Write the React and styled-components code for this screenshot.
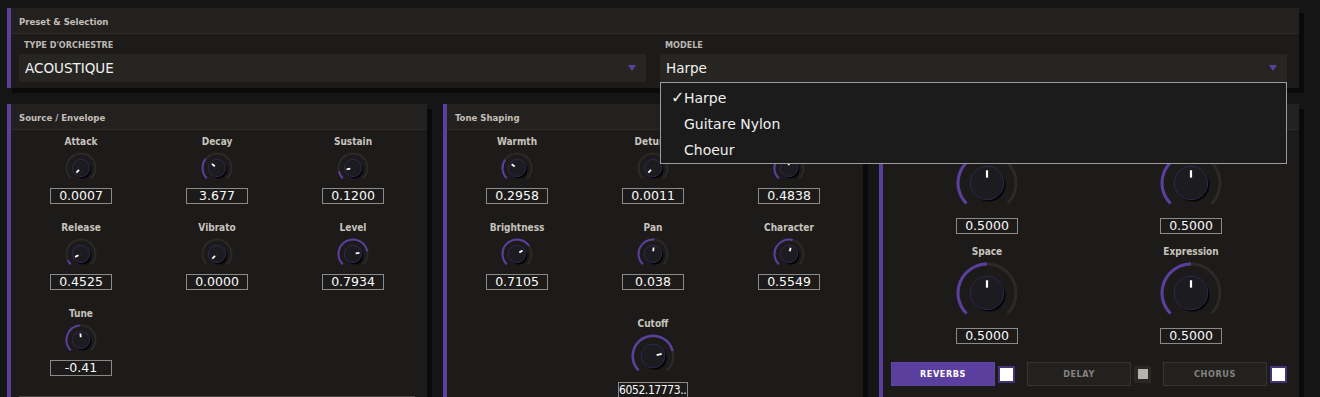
import React from 'react';
import styled, { createGlobalStyle } from 'styled-components';

const GlobalStyle = createGlobalStyle`
  html, body {
    margin: 0;
    padding: 0;
    background: #151515;
  }
  body {
    font-family: "DejaVu Sans Condensed", "DejaVu Sans", sans-serif;
    color: #ddd;
  }
`;

const Page = styled.div`
  width: 1320px;
  height: 397px;
  overflow: hidden;
  box-sizing: border-box;
  padding: 8px 0 0 7px;
  display: flex;
  flex-direction: column;
  gap: 16px;
`;

const Panel = styled.section`
  width: ${p => p.$w}px;
  height: ${p => (p.$h ? p.$h + 'px' : 'auto')};
  box-sizing: border-box;
  background: #1c1b1a;
  border-left: 4px solid #5a3f9e;
  box-shadow: 5px 5px 0 #0a0a0a;
  flex-shrink: 0;
`;

const PanelHeader = styled.header`
  height: 26px;
  box-sizing: border-box;
  display: flex;
  align-items: center;
  padding: 2px 0 0 8px;
  background: #222120;
  border-bottom: 1px solid #2c2b2a;
  font-size: 9.5px;
  font-weight: bold;
  color: #c3bfb8;
`;

const PanelBody = styled.div`
  padding: ${p => p.$pad || '6px 12px 0 8px'};
`;

const Row = styled.div`
  display: flex;
  gap: 16px;
`;

/* preset selectors */

const SelectGrid = styled.div`
  display: grid;
  grid-template-columns: 1fr 1fr;
  column-gap: 14px;
`;

const Field = styled.div`
  display: flex;
  flex-direction: column;
`;

const FieldLabel = styled.div`
  font-size: 9px;
  font-weight: bold;
  line-height: 12px;
  color: #bdb9b2;
  padding-left: 5px;
  margin-bottom: 3px;
`;

const SelectWrap = styled.div`
  position: relative;
`;

const SelectBox = styled.div`
  height: 28px;
  box-sizing: border-box;
  display: flex;
  align-items: center;
  justify-content: space-between;
  padding: 0 10px 0 6px;
  background: #262522;
  font-family: "DejaVu Sans", sans-serif;
  font-size: 13.5px;
  color: #f2f2f2;
`;

const Arrow = styled.span`
  width: 0;
  height: 0;
  border-left: 4px solid transparent;
  border-right: 4px solid transparent;
  border-top: 6px solid #5a3f9e;
`;

const Menu = styled.ul`
  position: absolute;
  top: 100%;
  left: 0;
  right: 0;
  z-index: 10;
  margin: 0;
  padding: 2px 0 0;
  list-style: none;
  background: #1b1b1b;
  border: 1px solid #9c9c9c;
`;

const MenuItem = styled.li`
  height: 26px;
  display: flex;
  align-items: center;
  padding-left: 10px;
  font-family: "DejaVu Sans", sans-serif;
  font-size: 14px;
  color: #f0f0f0;
`;

const Check = styled.span`
  width: 13px;
  font-size: 16px;
  line-height: 16px;
  font-weight: bold;
`;

/* knobs */

const KnobGrid = styled.div`
  display: grid;
  grid-template-columns: repeat(${p => p.$cols}, 1fr);
  column-gap: 12px;
  row-gap: ${p => p.$rowGap}px;
`;

const Cell = styled.div`
  display: flex;
  flex-direction: column;
  align-items: center;
  grid-column: ${p => p.$col || 'auto'};
  margin-top: ${p => p.$offset || 0}px;
`;

const KnobLabel = styled.div`
  font-size: 10px;
  font-weight: bold;
  line-height: 12px;
  height: 12px;
  color: #c8c4bd;
  margin-bottom: 4px;
`;

const ValueBox = styled.div`
  margin-top: 4px;
  width: ${p => p.$w || 62}px;
  height: 16px;
  box-sizing: border-box;
  border: 1px solid #8a8a8a;
  font-family: ${p => (p.$narrow ? '"DejaVu Sans Condensed", "DejaVu Sans", sans-serif' : '"DejaVu Sans", sans-serif')};
  font-size: ${p => p.$fs || 12.5}px;
  line-height: 14px;
  color: #fafafa;
  text-align: center;
  white-space: nowrap;
  overflow: hidden;
  letter-spacing: ${p => p.$ls || 0}px;
`;

const Divider = styled.div`
  margin-top: 20px;
  border-top: 2px solid #484643;
`;

/* fx buttons */

const FxRow = styled.div`
  margin-top: 18px;
  display: grid;
  grid-template-columns: repeat(3, 1fr);
  column-gap: 12px;
`;

const FxGroup = styled.div`
  display: flex;
  align-items: center;
  gap: 3px;
`;

const FxButton = styled.button`
  flex: 1;
  height: 24px;
  box-sizing: border-box;
  border: 1px solid ${p => (p.$on ? '#5f44a6' : '#353432')};
  background: ${p => (p.$on ? '#5a3f9e' : '#222120')};
  color: ${p => (p.$on ? '#ffffff' : '#858380')};
  font-family: inherit;
  font-size: 9px;
  font-weight: bold;
  letter-spacing: 0.6px;
  padding: 0;
`;

const FxCheck = styled.span`
  width: 17px;
  height: 17px;
  box-sizing: border-box;
  display: flex;
  align-items: center;
  justify-content: center;
  background: ${p => (p.$on ? '#ffffff' : '#2a2826')};
  border: 2px solid ${p => (p.$on ? '#45337a' : '#2a2826')};
  &::after {
    content: '';
    width: 10px;
    height: 10px;
    background: ${p => (p.$on ? 'transparent' : '#b6b1ab')};
  }
`;

function polar(c, r, a) {
  const rad = (a * Math.PI) / 180;
  return [c + r * Math.sin(rad), c - r * Math.cos(rad)];
}

function arcPath(c, r, a0, a1) {
  const [x0, y0] = polar(c, r, a0);
  const [x1, y1] = polar(c, r, a1);
  const large = a1 - a0 > 180 ? 1 : 0;
  return `M ${x0} ${y0} A ${r} ${r} 0 ${large} 1 ${x1} ${y1}`;
}

function Knob({ size, value, stroke }) {
  const c = size / 2;
  const r = c - stroke / 2 - 0.5;
  const ri = size * 0.27;
  const ang = -135 + value * 270;
  const [px0, py0] = polar(c, ri * 0.32, ang);
  const [px1, py1] = polar(c, ri * 0.76, ang);
  return (
    <svg width={size} height={size} viewBox={`0 0 ${size} ${size}`}>
      <path d={arcPath(c, r, -135, 135)} fill="none" stroke="#2b2a29" strokeWidth={stroke} />
      {value > 0.005 && (
        <path d={arcPath(c, r, -135, ang)} fill="none" stroke="#5a3f9e" strokeWidth={stroke} />
      )}
      <circle cx={c + 1.8} cy={c + 1.8} r={ri} fill="#040404" />
      <circle cx={c} cy={c} r={ri} fill="#1c1b1f" stroke="#2e2853" strokeWidth="1" />
      <line x1={px0} y1={py0} x2={px1} y2={py1} stroke="#ffffff" strokeWidth={size > 50 ? 2.2 : 1.8} />
    </svg>
  );
}

function KnobCell({ label, value, display, size = 32, stroke = 2, col, offset, box = {} }) {
  return (
    <Cell $col={col} $offset={offset}>
      <KnobLabel>{label}</KnobLabel>
      <Knob size={size} value={value} stroke={stroke} />
      <ValueBox $w={box.w} $fs={box.fs} $ls={box.ls} $narrow={box.narrow}>{display}</ValueBox>
    </Cell>
  );
}

const envelope = [
  { label: 'Attack', value: 0, display: '0.0007' },
  { label: 'Decay', value: 0.31, display: '3.677' },
  { label: 'Sustain', value: 0.12, display: '0.1200' },
  { label: 'Release', value: 0.07, display: '0.4525' },
  { label: 'Vibrato', value: 0, display: '0.0000' },
  { label: 'Level', value: 0.7934, display: '0.7934' },
  { label: 'Tune', value: 0.48, display: '-0.41' },
];

const tone = [
  { label: 'Warmth', value: 0.2958, display: '0.2958' },
  { label: 'Detune', value: 0, display: '0.0011' },
  { label: 'Stereo', value: 0.4838, display: '0.4838' },
  { label: 'Brightness', value: 0.7105, display: '0.7105' },
  { label: 'Pan', value: 0.519, display: '0.038' },
  { label: 'Character', value: 0.5549, display: '0.5549' },
];

const macros = [
  { label: 'Body', value: 0.5, display: '0.5000' },
  { label: 'Resonance', value: 0.5, display: '0.5000' },
  { label: 'Space', value: 0.5, display: '0.5000' },
  { label: 'Expression', value: 0.5, display: '0.5000' },
];

const fx = [
  { name: 'REVERBS', on: true, checked: true },
  { name: 'DELAY', on: false, checked: false },
  { name: 'CHORUS', on: false, checked: true },
];

export default function App() {
  return (
    <>
      <GlobalStyle />
      <Page>
        <Panel $w={1292}>
          <PanelHeader>Preset &amp; Selection</PanelHeader>
          <PanelBody $pad="5px 12px 6px 8px">
            <SelectGrid>
              <Field>
                <FieldLabel>TYPE D'ORCHESTRE</FieldLabel>
                <SelectWrap>
                  <SelectBox>
                    ACOUSTIQUE
                    <Arrow />
                  </SelectBox>
                </SelectWrap>
              </Field>
              <Field>
                <FieldLabel>MODELE</FieldLabel>
                <SelectWrap>
                  <SelectBox>
                    Harpe
                    <Arrow />
                  </SelectBox>
                  <Menu>
                    <MenuItem><Check>✓</Check>Harpe</MenuItem>
                    <MenuItem><Check />Guitare Nylon</MenuItem>
                    <MenuItem><Check />Choeur</MenuItem>
                  </Menu>
                </SelectWrap>
              </Field>
            </SelectGrid>
          </PanelBody>
        </Panel>

        <Row>
          <Panel $w={420} $h={320}>
            <PanelHeader>Source / Envelope</PanelHeader>
            <PanelBody>
              <KnobGrid $cols={3} $rowGap={18}>
                {envelope.map(k => (
                  <KnobCell key={k.label} {...k} />
                ))}
              </KnobGrid>
              <Divider />
            </PanelBody>
          </Panel>

          <Panel $w={420} $h={320}>
            <PanelHeader>Tone Shaping</PanelHeader>
            <PanelBody>
              <KnobGrid $cols={3} $rowGap={18}>
                {tone.map(k => (
                  <KnobCell key={k.label} {...k} />
                ))}
                <KnobCell
                  label="Cutoff"
                  value={0.78}
                  display="6052.17773..."
                  size={44}
                  stroke={2.5}
                  col={2}
                  offset={10}
                  box={{ w: 70, fs: 12, ls: -0.4, narrow: true }}
                />
              </KnobGrid>
            </PanelBody>
          </Panel>

          <Panel $w={420} $h={320}>
            <PanelHeader>Macros</PanelHeader>
            <PanelBody>
              <KnobGrid $cols={2} $rowGap={12}>
                {macros.map(k => (
                  <KnobCell key={k.label} {...k} size={62} stroke={3} />
                ))}
              </KnobGrid>
              <FxRow>
                {fx.map(f => (
                  <FxGroup key={f.name}>
                    <FxButton $on={f.on}>{f.name}</FxButton>
                    <FxCheck $on={f.checked} />
                  </FxGroup>
                ))}
              </FxRow>
            </PanelBody>
          </Panel>
        </Row>
      </Page>
    </>
  );
}
